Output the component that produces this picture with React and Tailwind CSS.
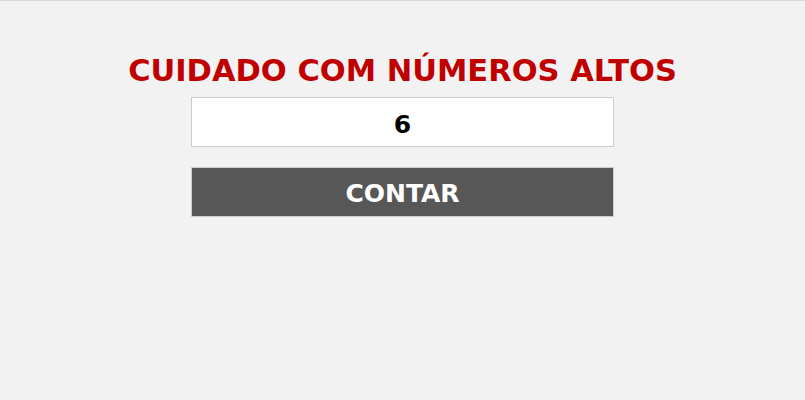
export default function App() {
  return (
    <div className="min-h-[400px] w-full border-t border-[#d9d9d9] bg-[#f2f2f2] font-['DejaVu_Sans',sans-serif]">
      <div className="flex flex-col items-center pt-[48px]">
        <h1 className="text-[30.5px] font-bold leading-[44px] text-[#c00000]">CUIDADO COM NÚMEROS ALTOS</h1>
        <input
          type="text"
          defaultValue="6"
          className="mt-[4px] h-[50px] w-[423px] border border-[#cccccc] bg-white pt-[4px] text-center text-[25px] font-bold text-black outline-none"
        />
        <button
          type="button"
          className="mt-[20px] h-[50px] w-[423px] border border-[#cccccc] bg-[#575757] pt-[4px] text-[25px] font-bold text-white"
        >
          CONTAR
        </button>
      </div>
    </div>
  );
}
